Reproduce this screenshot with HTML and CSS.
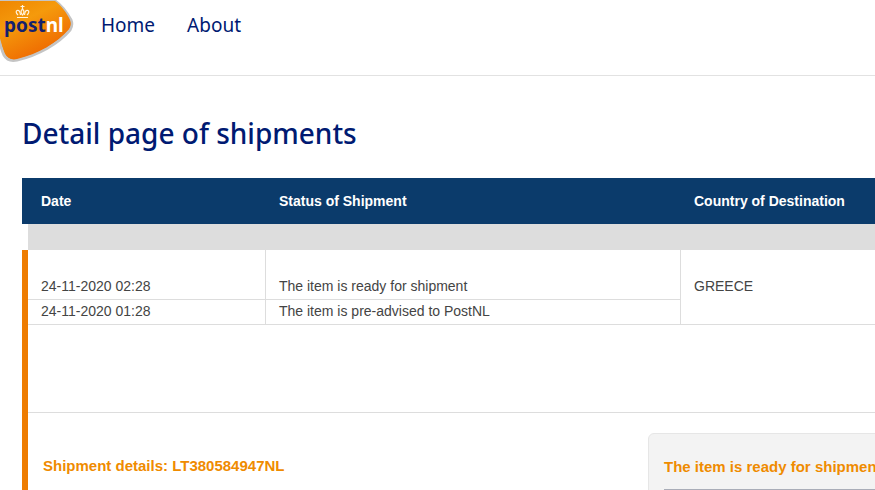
FILE: index.html
```html
<!DOCTYPE html>
<html lang="en">
<head>
    <meta charset="UTF-8">
    <meta name="viewport" content="width=device-width, initial-scale=1.0">
    <title>PostNL - Detail page of shipments</title>
    <link rel="stylesheet" href="styles.css">
</head>
<body>
    <header class="header">
        <a class="logo" href="#" aria-label="PostNL">
            <svg width="76" height="64" viewBox="0 0 76 64">
                <defs>
                    <linearGradient id="orange" x1="0" y1="0" x2="0.6" y2="1">
                        <stop offset="0" stop-color="#ee8500"/>
                        <stop offset="0.4" stop-color="#f59a0c"/>
                        <stop offset="1" stop-color="#ee6500"/>
                    </linearGradient>
                </defs>
                <path d="M-1 1H55C61 5 67 13 71 20Q73 25 70 30C58 44 38 55 17 60Q8 62 4 55Q0 46 -1 34Z" fill="url(#orange)" stroke="#c4c4c4" stroke-width="3"/>
                <path d="M-3 1H55C61 5 67 13 70 20Q72 25 69 29C57 43 38 54 17 59Q9 61 5 53Q1 44 -1 34Z" fill="url(#orange)"/>
                <g fill="none" stroke="#fff3dc" stroke-width="1.2">
                    <path d="M17 17.5H28M18 15Q15 12 17 10.5Q20 9.500 20.500 15M27 15Q30 12 28 10.500Q25 9.500 24.500 15M22.500 5V9M20.500 6.500H24.500"/>
                    <path d="M22.500 9Q19.500 12 22.500 15Q25.500 12 22.500 9Z"/>
                </g>
                <text class="logo-text" x="4" y="32"><tspan fill="#14206e">post</tspan><tspan fill="#fff">nl</tspan></text>
            </svg>
        </a>
        <nav class="nav">
            <a href="#">Home</a>
            <a href="#">About</a>
        </nav>
    </header>

    <main class="content">
        <h1>Detail page of shipments</h1>
        <table class="shipments">
            <colgroup>
                <col class="col-date">
                <col class="col-status">
                <col>
            </colgroup>
            <thead>
                <tr>
                    <th>Date</th>
                    <th>Status of Shipment</th>
                    <th>Country of Destination</th>
                </tr>
            </thead>
            <tbody>
                <tr class="divider">
                    <td colspan="3"></td>
                </tr>
                <tr class="latest">
                    <td class="marked">24-11-2020 02:28</td>
                    <td>The item is ready for shipment</td>
                    <td class="country" rowspan="2">GREECE</td>
                </tr>
                <tr>
                    <td class="marked">24-11-2020 01:28</td>
                    <td>The item is pre-advised to PostNL</td>
                </tr>
                <tr class="empty">
                    <td class="marked" colspan="3"></td>
                </tr>
                <tr class="details">
                    <td class="marked" colspan="3">
                        <div class="details-row">
                            <h2>Shipment details: LT380584947NL</h2>
                            <div class="panel">
                                <h2>The item is ready for shipment</h2>
                            </div>
                        </div>
                    </td>
                </tr>
            </tbody>
        </table>
    </main>
</body>
</html>
```
FILE: styles.css
```css
body {
    font-family: "Liberation Sans", Arial, sans-serif;
    font-size: 14px;
    line-height: 20px;
    color: #444;
    background: #fff;
    margin: 0;
    overflow: hidden;
}
.header {
    display: flex;
    gap: 25px;
    height: 75px;
    border-bottom: 1px solid #e2e2e2;
}
.logo svg {
    display: block;
}
.logo-text {
    font-family: "Noto Sans", sans-serif;
    font-size: 19px;
    font-weight: 700;
}
.nav {
    display: flex;
    gap: 32px;
    padding-top: 10px;
}
.nav a {
    font-family: "Noto Sans", sans-serif;
    font-size: 19px;
    line-height: 30px;
    color: #001a72;
    text-decoration: none;
}
.content {
    padding: 37px 0 0 22px;
}
h1 {
    font-family: "Noto Sans", sans-serif;
    font-size: 28px;
    font-weight: 500;
    line-height: 40px;
    color: #001a72;
    margin: 0 0 25px;
}
.shipments {
    table-layout: fixed;
    width: 100%;
    min-width: 1080px;
    border-collapse: separate;
    border-spacing: 0;
}
.col-date {
    width: 244px;
}
.col-status {
    width: 415px;
}
th {
    background: #0b3b6b;
    color: #fff;
    text-align: left;
    padding: 13px;
}
th:first-child {
    padding-left: 19px;
}
td {
    padding: 1px 13px 4px;
    border-right: 1px solid #ddd;
    box-shadow: inset 0 -1px #ddd;
}
.marked {
    border-left: 6px solid #ee7c00;
}
.divider td {
    height: 26px;
    padding: 0;
    background: #ddd;
    background-clip: padding-box;
    border-left: 6px solid #fff;
}
.latest td {
    padding-top: 26px;
}
.country {
    vertical-align: top;
}
.empty td {
    height: 88px;
    padding: 0;
}
.details td {
    padding: 20px 15px;
}
.details-row {
    display: grid;
    grid-template-columns: 605px 1fr;
    align-items: start;
}
h2 {
    font-size: 15px;
    line-height: 20px;
    color: #ef8b00;
    margin: 0;
}
.details-row > h2 {
    padding-top: 23px;
}
.panel {
    min-height: 160px;
    padding: 23px 15px;
    background: #f3f3f3;
    border: 1px solid #e6e6e6;
    border-radius: 6px;
}
.panel h2 {
    padding-bottom: 12px;
    border-bottom: 1px solid #a9adb8;
}
```
